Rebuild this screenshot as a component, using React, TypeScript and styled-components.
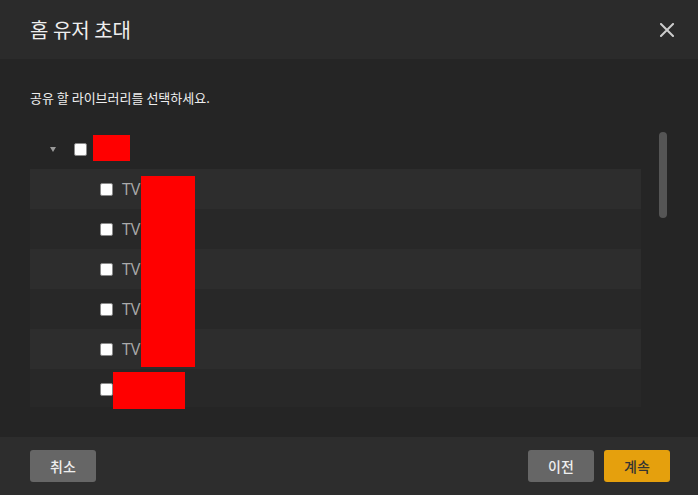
import React from 'react';
import styled, {createGlobalStyle} from 'styled-components';

const GlobalStyle = createGlobalStyle`
  html, body {
    margin: 0;
    padding: 0;
    background: #252525;
  }
  body {
    font-family: "Noto Sans CJK KR", "Open Sans", sans-serif;
  }
`;

const Dialog = styled.div`
  position: relative;
  display: flex;
  flex-direction: column;
  width: 698px;
  height: 495px;
  background: #252525;
  overflow: hidden;
`;

const Header = styled.div`
  display: flex;
  align-items: center;
  justify-content: space-between;
  height: 59px;
  padding: 0 20px 0 30px;
  background: #2b2b2b;
  flex-shrink: 0;
`;

const Title = styled.h1`
  margin: 0;
  font-size: 20px;
  font-weight: 400;
  color: #eeeeee;
`;

const CloseButton = styled.button`
  display: flex;
  align-items: center;
  justify-content: center;
  width: 16px;
  height: 16px;
  padding: 0;
  margin-right: 3px;
  border: 0;
  background: transparent;
  cursor: pointer;
`;

const Body = styled.div`
  display: flex;
  flex-direction: column;
  flex: 1;
  padding: 30px 31px 0 30px;
`;

const Hint = styled.p`
  margin: 0;
  font-size: 13px;
  line-height: 18px;
  color: #eeeeee;
`;

const TreeArea = styled.div`
  display: flex;
  margin-top: 22px;
  height: 278px;
`;

const TreeScroll = styled.div`
  flex: 1;
  overflow: hidden;
`;

const ScrollTrack = styled.div`
  width: 8px;
  margin-left: 18px;
  padding-top: 3px;
`;

const Thumb = styled.div`
  height: 86px;
  border-radius: 4px;
  background: #555555;
`;

const Row = styled.div<{ $indent: number; $stripe?: 'light' | 'dark' }>`
  display: flex;
  align-items: center;
  height: 40px;
  padding-left: ${p => p.$indent}px;
  background: ${p => (p.$stripe === 'light' ? '#2d2d2d' : p.$stripe === 'dark' ? '#282828' : 'transparent')};
`;

const Caret = styled.span`
  width: 0;
  height: 0;
  margin-right: 18px;
  border-left: 3.5px solid transparent;
  border-right: 3.5px solid transparent;
  border-top: 5px solid #9a9a9a;
`;

const Check = styled.span`
  box-sizing: border-box;
  width: 13px;
  height: 13px;
  border: 1px solid #8a8a8a;
  border-radius: 2px;
  background: #ffffff;
  flex-shrink: 0;
`;

const Label = styled.span`
  margin-left: 9px;
  font-family: "Open Sans", "Noto Sans CJK KR", sans-serif;
  font-size: 16px;
  color: #ababab;
`;

const Footer = styled.div`
  display: flex;
  align-items: center;
  height: 58px;
  padding: 0 28px 0 30px;
  background: #2d2d2d;
  flex-shrink: 0;
`;

const Spacer = styled.div`
  flex: 1;
`;

const Button = styled.button<{ $primary?: boolean }>`
  width: 66px;
  height: 32px;
  margin-left: ${p => (p.$primary ? '10px' : '0')};
  border: 0;
  border-radius: 3px;
  font-family: "Noto Sans CJK KR", sans-serif;
  font-size: 14px;
  font-weight: 500;
  color: ${p => (p.$primary ? '#333333' : '#eeeeee')};
  background: ${p => (p.$primary ? '#e5a00d' : '#666666')};
  cursor: pointer;
`;

const Redaction = styled.div`
  position: absolute;
  background: #ff0000;
`;

const CloseIcon = () => (
	<svg width="14" height="14" viewBox="0 0 14 14">
		<path d="M1 1L13 13M13 1L1 13" stroke="#cccccc" strokeWidth="2" strokeLinecap="square" />
	</svg>
);

const libraries = ['TV', 'TV', 'TV', 'TV', 'TV', ''];

export default function App() {
	return (
		<>
			<GlobalStyle />
			<Dialog>
				<Header>
					<Title>홈 유저 초대</Title>
					<CloseButton aria-label="닫기"><CloseIcon /></CloseButton>
				</Header>
				<Body>
					<Hint>공유 할 라이브러리를 선택하세요.</Hint>
					<TreeArea>
						<TreeScroll>
							<Row $indent={20}>
								<Caret />
								<Check />
							</Row>
							{libraries.map((name, i) => (
								<Row key={i} $indent={70} $stripe={i % 2 === 0 ? 'light' : 'dark'}>
									<Check />
									{name && <Label>{name}</Label>}
								</Row>
							))}
						</TreeScroll>
						<ScrollTrack><Thumb /></ScrollTrack>
					</TreeArea>
				</Body>
				<Footer>
					<Button>취소</Button>
					<Spacer />
					<Button>이전</Button>
					<Button $primary>계속</Button>
				</Footer>
				{/* censored names from the original capture */}
				<Redaction style={{left: 93, top: 135, width: 37, height: 26}} />
				<Redaction style={{left: 141, top: 176, width: 54, height: 191}} />
				<Redaction style={{left: 113, top: 372, width: 72, height: 37}} />
			</Dialog>
		</>
	);
}
